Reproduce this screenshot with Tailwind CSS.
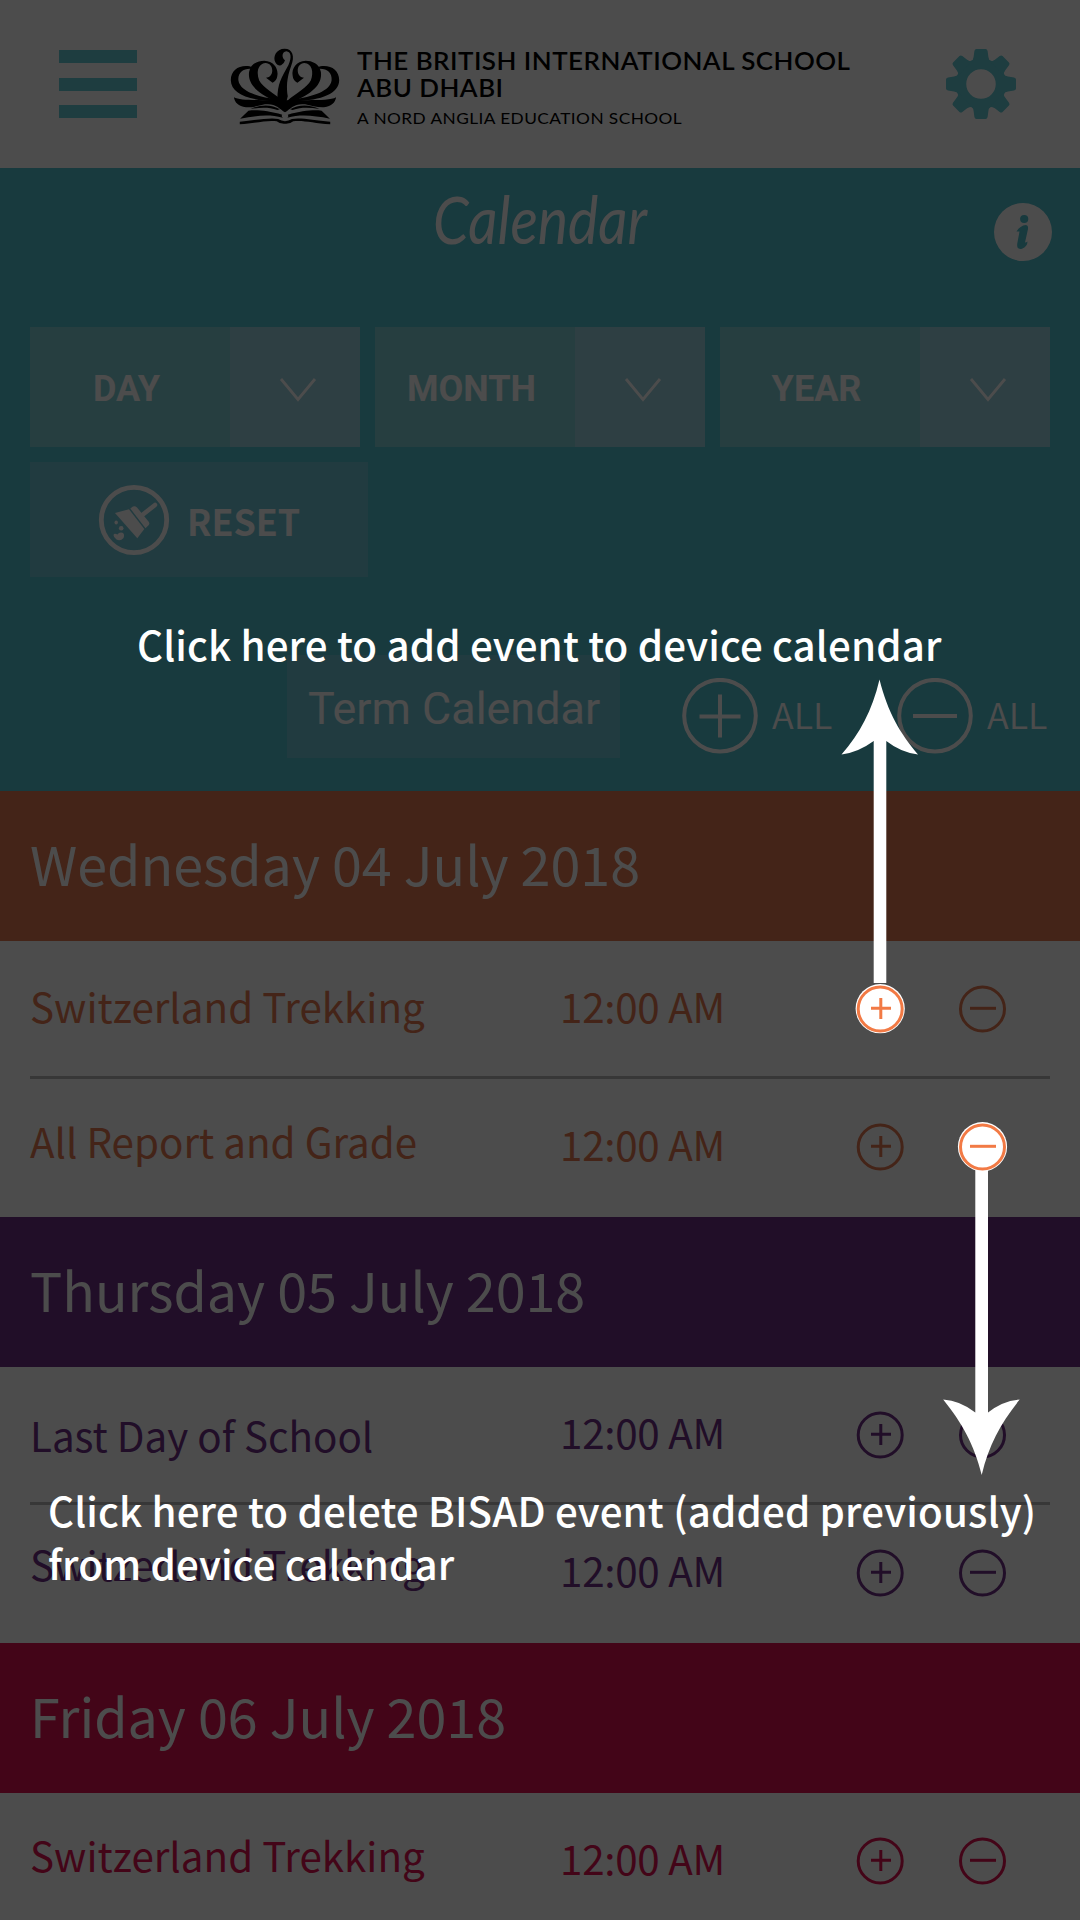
<!DOCTYPE html>
<html lang="en">
<head>
<meta charset="utf-8">
<title>Calendar</title>
<script src="https://cdn.jsdelivr.net/npm/@tailwindcss/browser@4"></script>
</head>
<body class="w-[1080px] h-[1920px] overflow-hidden bg-white">
<svg class="hidden">
  <defs>
    <symbol id="plus" viewBox="0 0 48 48"><g fill="none" stroke="currentColor" stroke-width="3"><circle cx="24.200" cy="24" r="22"/><path d="M15 23.300h20M24.800 13v21"/></g></symbol>
    <symbol id="minus" viewBox="0 0 48 48"><g fill="none" stroke="currentColor" stroke-width="3"><circle cx="24.500" cy="24" r="22"/><path d="M12 23.300h26"/></g></symbol>
    <path id="tooth" d="M-10 -22Q-7.600 -24.500 -7.400 -27L-6.600 -33Q-6.200 -35 -4.500 -35H4.500Q6.200 -35 6.600 -33L7.400 -27Q7.600 -24.500 10 -22Z"/>
    <g id="crown">
      <path d="M800 302C738 274 720 245 724 215C728 190 750 181 768 181C796 182 809 205 806 225C805 238 798 245 792 247L773 232C782 232 790 225 791 213C792 198 784 189 772 188C750 190 744 215 753 240C764 263 796 278 822 302Z"/>
      <path d="M800 303C720 300 672 280 671 240C671 212 690 197 715 197C722 197 729 198 733 201L729 205C706 204 691 217 693 240C697 272 745 290 810 298Z"/>
      <path d="M680 291C700 303 760 298 828 300V336C812 325 800 308 770 312C752 316 735 322 715 321C693 319 682 306 680 291Z"/>
      <path d="M698 355L722 331C745 328 780 331 820 343Q816 349 822 352C780 341 745 346 698 355Z"/>
      <path d="M728 326C755 312 790 311 813 327L806 329C780 320 755 322 728 326Z"/>
      <path d="M697 364C745 360 785 350 808 356Q818 362 828 363V370Q812 371 804 363C780 358 745 368 697 372Z"/>
    </g>
  </defs>
</svg>
<div class="relative h-[1920px] font-['Noto_Sans_CJK_SC',sans-serif]">

  <header class="flex h-[168px] text-[#64cbd5]">
    <div class="ml-[59px] mt-[50px] w-[78px]">
      <div class="h-[13px] bg-current"></div>
      <div class="mt-[15px] h-[13px] bg-current"></div>
      <div class="mt-[14px] h-[13px] bg-current"></div>
    </div>
    <svg class="ml-[90px] mt-[47px] h-[80px] w-[116px] text-black" viewBox="660 140 336 240" preserveAspectRatio="none" fill="currentColor">
      <use href="#crown"/>
      <use href="#crown" transform="translate(1656 0) scale(-1 1)"/>
      <path d="M828 180C818 174 818 154 832 153C846 154 848 172 838 194C818 232 806 250 806 296L828 320L836 288C832 262 832 235 846 196C857 168 850 145 827 145C802 145 792 170 800 186C806 197 815 198 820 192C826 188 826 184 828 180Z"/>
    </svg>
    <div class="ml-[14px] mt-[47px] w-[580px] whitespace-nowrap font-['Lato',sans-serif] text-black">
      <div class="origin-left scale-x-[1.08] text-[24px] leading-[27px] tracking-[0.450px] font-semibold">THE BRITISH INTERNATIONAL SCHOOL</div>
      <div class="origin-left scale-x-[1.08] text-[24px] leading-[27px] tracking-[0.450px] font-semibold">ABU DHABI</div>
      <div class="mt-[5px] origin-left scale-x-[1.08] text-[16px] leading-[24px] tracking-[0.400px]">A NORD ANGLIA EDUCATION SCHOOL</div>
    </div>
    <svg class="ml-[8px] mt-[48px] h-[72px] w-[72px] shrink-0" viewBox="-36 -36 72 72" fill="currentColor">
      <circle r="20" fill="none" stroke="currentColor" stroke-width="10.500"/>
      <use href="#tooth"/><use href="#tooth" transform="rotate(45)"/><use href="#tooth" transform="rotate(90)"/><use href="#tooth" transform="rotate(135)"/><use href="#tooth" transform="rotate(180)"/><use href="#tooth" transform="rotate(225)"/><use href="#tooth" transform="rotate(270)"/><use href="#tooth" transform="rotate(315)"/>
    </svg>
  </header>

  <section class="h-[623px] bg-[#50c1cf] px-[30px] text-white">
    <div class="flex h-[159px] justify-between">
      <h1 class="ml-[403px] mt-[15px] origin-left scale-x-[0.880] font-['Lato',sans-serif] text-[65px] italic leading-[72px]">Calendar</h1>
      <svg class="-mr-[3px] mt-[34px] h-[60px] w-[60px]" viewBox="993 202 60 60"><circle cx="1023" cy="232" r="29" fill="#fff"/><g fill="#50c1cf"><circle cx="1024.200" cy="219" r="4.100"/><path d="M1016.500 231.500Q1020 225.500 1026 225Q1028.500 225.500 1028 229L1025 242.500Q1026.500 242.500 1027.500 241.500Q1027.500 246.500 1022 248.700Q1016.500 250 1017.200 244L1019.500 231.500Z"/></g></svg>
    </div>
    <div class="grid grid-cols-3 gap-[15px] font-['Roboto',sans-serif] text-[36px] font-bold">
      <div class="flex h-[120px]"><div class="flex w-[200px] items-center justify-center bg-[#7fcfd5] pr-[7px] pt-[3px]">DAY</div><div class="flex grow items-center justify-center bg-[#99d2df] pl-[6px] pt-[6px]"><svg class="h-[26px] w-[38px]" viewBox="0 0 38 26" fill="none" stroke="#fff" stroke-width="2.800"><path d="M2 2L19 22.500L36 2"/></svg></div></div>
      <div class="flex h-[120px]"><div class="flex w-[200px] items-center justify-center bg-[#7fcfd5] pr-[7px] pt-[3px]">MONTH</div><div class="flex grow items-center justify-center bg-[#99d2df] pl-[6px] pt-[6px]"><svg class="h-[26px] w-[38px]" viewBox="0 0 38 26" fill="none" stroke="#fff" stroke-width="2.800"><path d="M2 2L19 22.500L36 2"/></svg></div></div>
      <div class="flex h-[120px]"><div class="flex w-[200px] items-center justify-center bg-[#7fcfd5] pr-[7px] pt-[3px]">YEAR</div><div class="flex grow items-center justify-center bg-[#99d2df] pl-[6px] pt-[6px]"><svg class="h-[26px] w-[38px]" viewBox="0 0 38 26" fill="none" stroke="#fff" stroke-width="2.800"><path d="M2 2L19 22.500L36 2"/></svg></div></div>
    </div>
    <div class="mt-[15px] flex h-[115px] w-[338px] bg-[#71c5d5]">
      <svg class="ml-[68px] mt-[22px] h-[72px] w-[72px]" viewBox="98 484 72 72" fill="#fff">
        <circle cx="134" cy="520" r="32.700" fill="none" stroke="#fff" stroke-width="4.800"/>
        <path d="M155 505L141 516" stroke="#fff" stroke-width="4.500" stroke-linecap="round"/>
        <path d="M130.300 508.500L133 506.500Q135 505.500 137 507.500L148.500 521.500Q150 523.500 148.500 525.300L145.500 528.200Z"/>
        <path d="M115 513L129 509.200L144.300 529L137.300 538.300Z"/>
        <ellipse cx="116.200" cy="522.400" rx="1.700" ry="2"/><circle cx="121.200" cy="528.300" r="2.300"/>
        <path d="M113.500 535Q114 532.800 117.500 534.500Q119 532 122.500 532.800Q125 534 123.500 538Q120.500 541.500 116.500 539.500Q113.500 537.500 113.500 535Z"/>
      </svg>
      <div class="ml-[17px] mt-[28px] text-[35.800px] font-bold leading-[60px]">RESET</div>
    </div>
    <div class="mt-[78px] flex h-[103px]">
      <div class="ml-[257px] w-[333px] bg-[#71c5d5] pl-[1px] pt-[25px] text-center font-['Roboto',sans-serif] text-[44.900px] leading-[58px]">Term Calendar</div>
      <svg class="ml-[62px] mt-[23px] h-[76px] w-[76px]" viewBox="0 0 76 76" fill="none" stroke="#fff" stroke-width="4"><circle cx="38" cy="37.700" r="35.800"/><path d="M17.500 38.500h41M38 16.500v43"/></svg>
      <div class="ml-[14px] mt-[28px] w-[62px] text-[36px] font-[350] leading-[60px]">ALL</div>
      <svg class="ml-[63px] mt-[23px] h-[76px] w-[76px] shrink-0" viewBox="0 0 76 76" fill="none" stroke="#fff" stroke-width="4"><circle cx="38" cy="37.700" r="35.800"/><path d="M16 38h44"/></svg>
      <div class="ml-[14px] mt-[28px] text-[36px] font-[350] leading-[60px]">ALL</div>
    </div>
  </section>

  <section class="text-[#e37850]">
    <h2 class="h-[150px] bg-[#e37850] pl-[30px] pt-[32px] text-[53.820px] leading-[80px] text-white">Wednesday 04 July 2018</h2>
    <div class="mx-[30px] flex h-[138px] border-b-[3px] border-[#bababa] text-[40.350px] leading-[60px]">
      <div class="w-[530px] pt-[35px]">Switzerland Trekking</div><div class="w-[296px] pt-[35px] tracking-[-0.250px]">12:00 AM</div>
      <svg class="mt-[44px] h-[48px] w-[48px]"><use href="#plus"/></svg><svg class="ml-[54px] mt-[44px] h-[48px] w-[48px]"><use href="#minus"/></svg>
    </div>
    <div class="mx-[30px] flex h-[138px] text-[40.350px] leading-[60px]">
      <div class="w-[530px] pt-[32px]">All Report and Grade</div><div class="w-[296px] pt-[35px] tracking-[-0.250px]">12:00 AM</div>
      <svg class="mt-[44px] h-[48px] w-[48px]"><use href="#plus"/></svg><svg class="ml-[54px] mt-[44px] h-[48px] w-[48px]"><use href="#minus"/></svg>
    </div>
  </section>

  <section class="text-[#6e2f85]">
    <h2 class="h-[150px] bg-[#6e2f85] pl-[30px] pt-[32px] text-[53.820px] leading-[80px] text-white">Thursday 05 July 2018</h2>
    <div class="mx-[30px] flex h-[138px] border-b-[3px] border-[#bababa] text-[40.350px] leading-[60px]">
      <div class="w-[530px] pt-[38px]">Last Day of School</div><div class="w-[296px] pt-[35px] tracking-[-0.250px]">12:00 AM</div>
      <svg class="mt-[44px] h-[48px] w-[48px]"><use href="#plus"/></svg><svg class="ml-[54px] mt-[44px] h-[48px] w-[48px]"><use href="#minus"/></svg>
    </div>
    <div class="mx-[30px] flex h-[138px] text-[40.350px] leading-[60px]">
      <div class="w-[530px] pt-[29px]">Switzerland Trekking</div><div class="w-[296px] pt-[35px] tracking-[-0.250px]">12:00 AM</div>
      <svg class="mt-[44px] h-[48px] w-[48px]"><use href="#plus"/></svg><svg class="ml-[54px] mt-[44px] h-[48px] w-[48px]"><use href="#minus"/></svg>
    </div>
  </section>

  <section class="text-[#df1150]">
    <h2 class="h-[150px] bg-[#df1150] pl-[30px] pt-[32px] text-[53.820px] leading-[80px] text-white">Friday 06 July 2018</h2>
    <div class="mx-[30px] flex h-[127px] text-[40.350px] leading-[60px]">
      <div class="w-[530px] pt-[32px]">Switzerland Trekking</div><div class="w-[296px] pt-[35px] tracking-[-0.250px]">12:00 AM</div>
      <svg class="mt-[44px] h-[48px] w-[48px]"><use href="#plus"/></svg><svg class="ml-[54px] mt-[44px] h-[48px] w-[48px]"><use href="#minus"/></svg>
    </div>
  </section>

  <!-- Help overlay -->
  <div class="absolute inset-0 bg-black/70 text-[40.250px] font-medium leading-[52.500px] tracking-[0.150px] text-white">
    <svg class="absolute inset-0 h-[1920px] w-[1080px]" viewBox="0 0 1080 1920" fill="#fff">
      <path d="M879.500 679.500C888 713 900 733 918 754.500Q901 752.500 886.300 741V983H873.700V741Q858 752.500 841.500 754.500C860 733 872 711 879.500 679.500Z"/>
      <path d="M975.300 1169H988V1412.500Q1003 1400.500 1019.700 1399.500C1001 1423 989 1444 981.700 1475C974 1444 962 1423 943.200 1399.500Q960 1400.500 975.300 1412.500Z"/>
      <circle cx="880.200" cy="1008.700" r="24.600"/><circle cx="982.500" cy="1146.700" r="24.600"/>
    </svg>
    <svg class="absolute left-[856px] top-[985px] h-[48px] w-[48px] text-[#f27a45]"><use href="#plus"/></svg>
    <svg class="absolute left-[958px] top-[1123px] h-[48px] w-[48px] text-[#f27a45]"><use href="#minus"/></svg>
    <p class="absolute left-[137px] top-[618px] whitespace-nowrap">Click here to add event to device calendar</p>
    <p class="absolute left-[48px] top-[1484px] whitespace-nowrap">Click here to delete BISAD event (added previously)<br>from device calendar</p>
  </div>
</div>
</body>
</html>
